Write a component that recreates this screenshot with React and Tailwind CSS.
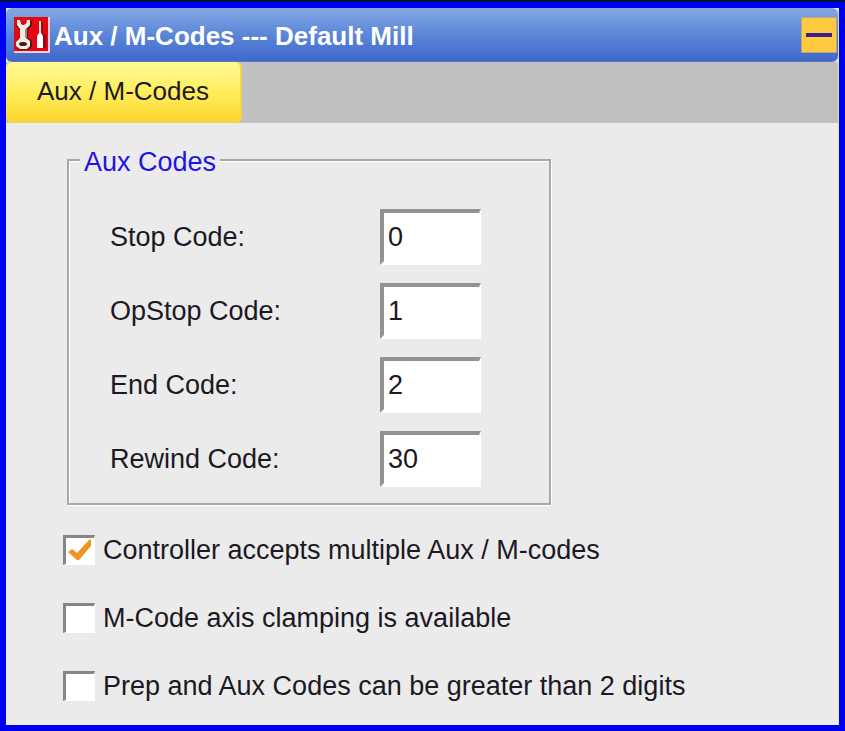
import { useState } from "react";

const auxCodes = [
  { id: "stop", label: "Stop Code:", value: "0" },
  { id: "opstop", label: "OpStop Code:", value: "1" },
  { id: "end", label: "End Code:", value: "2" },
  { id: "rewind", label: "Rewind Code:", value: "30" },
];

const options = [
  { id: "multiple", label: "Controller accepts multiple Aux / M-codes", checked: true },
  { id: "clamping", label: "M-Code axis clamping is available", checked: false },
  { id: "digits", label: "Prep and Aux Codes can be greater than 2 digits", checked: false },
];

function ToolsIcon() {
  return (
    <svg viewBox="0 0 36 36" className="w-9 h-9 shrink-0" aria-hidden="true">
      <rect width="36" height="36" fill="#f3c9d2" />
      <rect width="34" height="34" fill="#e30613" />
      {/* wrench */}
      <path d="M4 4l3 3h5l4-3h2v5l-4 4v8l4 3v6l-4 3H5l-3-4v-5l4-4v-7L2 9z" fill="#5e1712" />
      <path d="M3 3h3l1 4 2 1 3-1 1-4h3v5l-4 4v9l4 3v5l-3 3H6l-4-3v-4l4-4v-9L3 8z" fill="#f4eee4" />
      <ellipse cx="9" cy="27" rx="4" ry="2" fill="#4a1a16" />
      <path d="M11 12h2v9h-2z" fill="#a0877c" />
      {/* screwdriver */}
      <path d="M27 5h2v11l3 2v13h-3z" fill="#8c0a12" />
      <path d="M25 4h2v12h-2z" fill="#f3d9d4" />
      <path d="M23 19l2-3h2l2 3v12h-6z" fill="#fff" />
    </svg>
  );
}

function CodeField({ id, label, value, onChange }) {
  return (
    <div className="flex items-center">
      <label htmlFor={id} className="w-[270px]">{label}</label>
      <input
        id={id}
        type="text"
        value={value}
        onChange={(e) => onChange(id, e.target.value)}
        className="w-[101px] h-14 pl-1 bg-white border-t-4 border-l-4 border-r-2 border-b-4 border-t-[#929292] border-l-[#929292] border-r-white border-b-white outline-none"
      />
    </div>
  );
}

function CheckOption({ id, label, checked, onChange }) {
  return (
    <label htmlFor={id} className="flex items-center gap-2">
      <span className="relative w-8 h-[30px] shrink-0">
        <input
          id={id}
          type="checkbox"
          checked={checked}
          onChange={() => onChange(id)}
          className="block appearance-none w-8 h-[30px] bg-white border-t-3 border-l-3 border-r border-b border-t-[#868686] border-l-[#868686] border-r-white border-b-white"
        />
        {checked && (
          <svg viewBox="0 0 32 30" className="absolute inset-0 pointer-events-none" aria-hidden="true">
            <path d="M5 17l4-3 5 4L26 5l2-1v7L16 25h-2z" fill="#ee9420" />
          </svg>
        )}
      </span>
      <span>{label}</span>
    </label>
  );
}

export default function App() {
  const [codes, setCodes] = useState(auxCodes);
  const [checks, setChecks] = useState(options);

  const changeCode = (id, value) => setCodes((prev) => prev.map((c) => (c.id === id ? { ...c, value } : c)));
  const toggle = (id) => setChecks((prev) => prev.map((o) => (o.id === id ? { ...o, checked: !o.checked } : o)));

  return (
    <div className="min-h-screen flex flex-col border-t-2 border-[#00103c] bg-[#0000f0] text-[#1c1824] text-[27px] leading-[30px] font-['Liberation_Sans',Arial,sans-serif]">
      <div className="flex-1 flex flex-col m-[6px] bg-[#ebebeb] border-r border-[#dedefa]">
        {/* Title bar */}
        <header className="flex items-center h-[54px] pl-2 pr-px pt-px gap-1 rounded-md bg-linear-to-b from-[#86a8e4] via-[#5b86d9] to-[#4068ca] border-b border-[#5878c0]">
          <ToolsIcon />
          <h1 className="flex-1 pt-0.5 text-white font-bold text-[26px]">Aux / M-Codes --- Default Mill</h1>
          <button type="button" aria-label="Minimize" className="w-9 h-9 flex items-center justify-center bg-[#ffca3f] border border-[#b5a783]">
            <span className="w-[26px] h-1 bg-[#39208c]" />
          </button>
        </header>

        {/* Tabs */}
        <nav className="flex h-[61px] bg-[#c0c0c0]">
          <button type="button" className="w-[236px] pb-0.5 rounded-md bg-linear-to-b from-[#fff894] via-[#ffee5c] to-[#fbd62b] border-r-2 border-b-2 border-[#f3d54a] text-[26px]">
            Aux / M-Codes
          </button>
        </nav>

        <main className="flex-1 pt-5 pl-[57px]">
          <fieldset className="w-[484px] ml-1 pl-[41px] pt-8 pb-4 border-2 border-[#a9a9a9] shadow-[inset_1px_1px_0_#fff,1px_1px_0_#fff]">
            <legend className="-ml-[30px] px-1 pt-1 bg-[#ebebeb] text-[#1f14e6]">Aux Codes</legend>
            <div className="flex flex-col gap-[18px]">
              {codes.map((code) => (
                <CodeField key={code.id} {...code} onChange={changeCode} />
              ))}
            </div>
          </fieldset>

          <div className="flex flex-col items-start gap-[38px] pt-[30px]">
            {checks.map((option) => (
              <CheckOption key={option.id} {...option} onChange={toggle} />
            ))}
          </div>
        </main>
      </div>
    </div>
  );
}
